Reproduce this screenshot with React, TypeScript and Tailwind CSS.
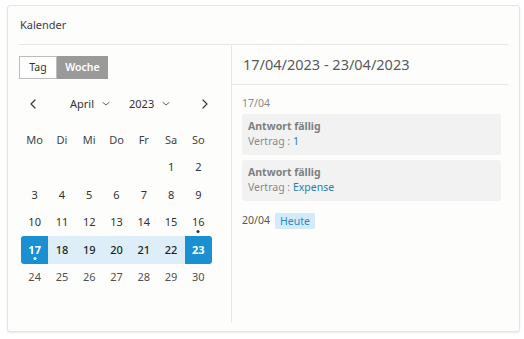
import React from "react";

const weekdays = ["Mo", "Di", "Mi", "Do", "Fr", "Sa", "So"];

const weeks: (number | null)[][] = [
  [null, null, null, null, null, 1, 2],
  [3, 4, 5, 6, 7, 8, 9],
  [10, 11, 12, 13, 14, 15, 16],
  [17, 18, 19, 20, 21, 22, 23],
  [24, 25, 26, 27, 28, 29, 30],
];

const Chevron = ({ dir }: { dir: "left" | "right" | "down" }) => {
  const d =
    dir === "left" ? "M6 1 L2 5 L6 9" : dir === "right" ? "M2 1 L6 5 L2 9" : "M1 2.5 L4 5 L7 2.5";
  const size = dir === "down" ? { w: 8, h: 8 } : { w: 8, h: 10 };
  return (
    <svg width={size.w} height={size.h} viewBox={`0 0 ${size.w} ${size.h}`} fill="none">
      <path
        d={d}
        stroke={dir === "down" ? "#666" : "#3c3c3c"}
        strokeWidth={dir === "down" ? "1" : "1.2"}
        strokeLinecap="round"
        strokeLinejoin="round"
      />
    </svg>
  );
};

const DayCell = ({ day }: { day: number | null }) => {
  if (day === null) return <div className="h-[27.5px]" />;
  const start = day === 17;
  const end = day === 23;
  const inWeek = day >= 17 && day <= 23;
  const dot = day === 16 || day === 17;
  return (
    <div
      className={`relative h-[27.5px] flex items-center justify-center text-[11px] ${
        start
          ? "bg-[#1a8fd1] text-white font-bold rounded-l-[3px]"
          : end
          ? "bg-[#1a8fd1] text-white font-bold rounded-r-[3px]"
          : inWeek
          ? "bg-[#ddeef9] text-[#1e1e1e] font-medium"
          : day >= 24
          ? "text-[#505050]"
          : "text-[#333]"
      }`}
    >
      {day}
      {dot && (
        <span
          className={`absolute left-1/2 -translate-x-1/2 top-[21px] w-[3px] h-[3px] rounded-full ${
            start ? "bg-white" : "bg-[#333]"
          }`}
        />
      )}
    </div>
  );
};

const EventCard = ({ value }: { value: string }) => (
  <div className="rounded-[3px] bg-[#f2f2f2] px-[6px] pt-[5px] pb-[6px] text-[10.5px] leading-[15px]">
    <div className="font-bold text-[#7f7f7f]">Antwort fällig</div>
    <div className="text-[#8a8a8a]">
      Vertrag : <span className="text-[#1f7fbd]">{value}</span>
    </div>
  </div>
);

export default function App() {
  return (
    <div className="min-h-[339px] bg-white pt-[5px] pl-[7px]" style={{ fontFamily: '"Noto Sans", "Open Sans", sans-serif' }}>
      <div className="w-[513px] h-[327px] bg-[#fdfdfc] border border-[#e4e4e4] rounded-[3px] shadow-[0_1px_2px_rgba(0,0,0,0.08)] px-[11px]">
        {/* Header */}
        <div className="h-[39px] flex items-center pl-[1px] border-b border-[#e6e6e6] text-[11px] text-[#3c3c3c]">
          Kalender
        </div>

        <div className="flex h-[278px]">
          {/* Left: calendar */}
          <div className="w-[213px] border-r border-[#e6e6e6] pt-[11px] pb-[10px]">
            <div className="flex h-[23px] text-[10.5px]">
              <div className="w-[38px] flex items-center justify-center border border-[#bdbdbd] bg-white text-[#333]">
                Tag
              </div>
              <div className="w-[51px] flex items-center justify-center bg-[#9a9a9a] text-white font-semibold">
                Woche
              </div>
            </div>

            <div className="mt-[12px] h-[26px] flex items-center text-[11px] text-[#333]">
              <div className="w-[8px] ml-[10px]">
                <Chevron dir="left" />
              </div>
              <div className="ml-[33px] flex items-center gap-[8px]">
                April <Chevron dir="down" />
              </div>
              <div className="ml-[19px] flex items-center gap-[8px]">
                2023 <Chevron dir="down" />
              </div>
              <div className="ml-[31px]">
                <Chevron dir="right" />
              </div>
            </div>

            <div className="ml-[2px] w-[191px] mt-[9px]">
              <div className="grid grid-cols-7 h-[27.5px] items-center text-[11px] text-[#444]">
                {weekdays.map((w) => (
                  <div key={w} className="text-center">
                    {w}
                  </div>
                ))}
              </div>
              {weeks.map((week, i) => (
                <div key={i} className="grid grid-cols-7">
                  {week.map((d, j) => (
                    <DayCell key={j} day={d} />
                  ))}
                </div>
              ))}
            </div>
          </div>

          {/* Right: agenda */}
          <div className="flex-1">
            <div className="h-[40px] flex items-center pl-[11px] border-b border-[#e6e6e6] text-[14.5px] text-[#5a5a5a]">
              17/04/2023 - 23/04/2023
            </div>
            <div className="pl-[10px] pr-[7px] pt-[10px]">
              <div className="text-[10.5px] text-[#8a8a8a] h-[16px] leading-[16px]">17/04</div>
              <div className="mt-[3px] flex flex-col gap-[5px]">
                <EventCard value="1" />
                <EventCard value="Expense" />
              </div>
              <div className="mt-[12px] flex items-center gap-[5px] text-[10.5px]">
                <span className="text-[#555]">20/04</span>
                <span className="bg-[#d3eaf8] text-[#2a8cc7] rounded-[2px] px-[5px] h-[16px] leading-[16px]">
                  Heute
                </span>
              </div>
            </div>
          </div>
        </div>
      </div>
    </div>
  );
}
